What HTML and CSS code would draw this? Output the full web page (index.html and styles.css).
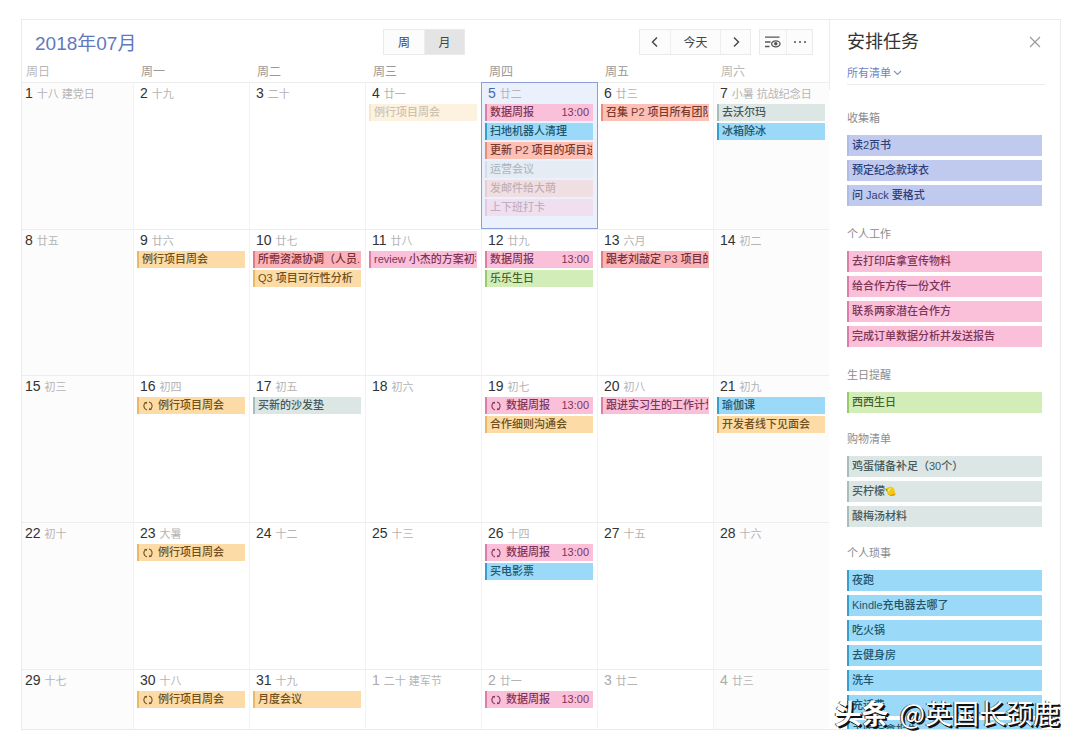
FILE: index.html
```html
<!DOCTYPE html>
<html lang="zh-CN">
<head>
<meta charset="utf-8">
<meta name="viewport" content="width=device-width, initial-scale=1">
<title>2018年07月</title>
<link rel="stylesheet" href="styles.css">
</head>
<body>
<svg width="0" height="0" class="sprite" aria-hidden="true">
  <symbol id="repeat" viewBox="0 0 12 12">
    <path d="M5 10A4.100 4.100 0 0 1 3 3.200M7 2A4.100 4.100 0 0 1 9 8.800" fill="none" stroke="currentColor" stroke-width="1.100"/>
    <path d="M2 2.200 5.200 1.700 4.400 4.300zM10 9.800 6.800 10.300 7.600 7.700z" fill="currentColor"/>
  </symbol>
</svg>
<div class="window">
  <main class="calendar">
    <header class="toolbar">
      <h1 class="month-title">2018年07月</h1>
      <div class="segmented">
        <button type="button">周</button><button type="button" class="active" aria-pressed="true">月</button>
      </div>
      <div class="tools">
        <div class="segmented nav">
          <button type="button" class="step" aria-label="上个月"><svg width="10" height="12" viewBox="0 0 10 12"><path d="M7 1.5 2.5 6 7 10.5" fill="none" stroke="#444" stroke-width="1.4"/></svg></button><button type="button" class="today-button">今天</button><button type="button" class="step" aria-label="下个月"><svg width="10" height="12" viewBox="0 0 10 12"><path d="M3 1.5 7.5 6 3 10.5" fill="none" stroke="#444" stroke-width="1.4"/></svg></button>
        </div>
        <div class="segmented view">
          <button type="button" aria-label="显示选项"><svg width="18" height="14" viewBox="0 0 18 14" fill="none" stroke="#555" stroke-width="1.3"><path d="M1 2.2H15.500M1 7H6.500M1 11.500H5.500"/><ellipse cx="11.800" cy="8.800" rx="4.200" ry="3"/><circle cx="11.800" cy="8.800" r="1.100" fill="#555"/></svg></button><button type="button" aria-label="更多"><svg width="14" height="4" viewBox="0 0 14 4" fill="#555"><circle cx="2" cy="2" r="1"/><circle cx="7" cy="2" r="1"/><circle cx="12" cy="2" r="1"/></svg></button>
        </div>
      </div>
    </header>
    <table class="month">
      <colgroup><col class="first-col"><col><col><col><col><col><col></colgroup>
      <thead>
        <tr><th class="weekend">周日</th><th>周一</th><th>周二</th><th>周三</th><th>周四</th><th>周五</th><th class="weekend">周六</th></tr>
      </thead>
      <tbody>
        <tr>
          <td class="weekend"><div class="day"><b>1</b>十八 建党日</div></td>
          <td><div class="day"><b>2</b>十九</div></td>
          <td><div class="day"><b>3</b>二十</div></td>
          <td><div class="day"><b>4</b>廿一</div>
            <ul><li class="event orange done"><span>例行项目周会</span></li></ul></td>
          <td class="today"><div class="day"><b>5</b>廿二</div>
            <ul>
              <li class="event pink"><span>数据周报</span><time>13:00</time></li>
              <li class="event blue"><span>扫地机器人清理</span></li>
              <li class="event salmon"><span>更新 P2 项目的项目进度</span></li>
              <li class="event gray done"><span>运营会议</span></li>
              <li class="event salmon done"><span>发邮件给大萌</span></li>
              <li class="event pink done"><span>上下班打卡</span></li>
            </ul></td>
          <td><div class="day"><b>6</b>廿三</div>
            <ul><li class="event salmon"><span>召集 P2 项目所有团队</span></li></ul></td>
          <td class="weekend"><div class="day"><b>7</b>小暑 抗战纪念日</div>
            <ul><li class="event gray"><span>去沃尔玛</span></li><li class="event blue"><span>冰箱除冰</span></li></ul></td>
        </tr>
        <tr class="second-week">
          <td class="weekend"><div class="day"><b>8</b>廿五</div></td>
          <td><div class="day"><b>9</b>廿六</div>
            <ul><li class="event orange"><span>例行项目周会</span></li></ul></td>
          <td><div class="day"><b>10</b>廿七</div>
            <ul><li class="event red"><span>所需资源协调（人员..</span></li><li class="event orange"><span>Q3 项目可行性分析</span></li></ul></td>
          <td><div class="day"><b>11</b>廿八</div>
            <ul><li class="event pink"><span>review 小杰的方案初稿</span></li></ul></td>
          <td><div class="day"><b>12</b>廿九</div>
            <ul><li class="event pink"><span>数据周报</span><time>13:00</time></li><li class="event green"><span>乐乐生日</span></li></ul></td>
          <td><div class="day"><b>13</b>六月</div>
            <ul><li class="event red"><span>跟老刘敲定 P3 项目的</span></li></ul></td>
          <td class="weekend"><div class="day"><b>14</b>初二</div></td>
        </tr>
        <tr>
          <td class="weekend"><div class="day"><b>15</b>初三</div></td>
          <td><div class="day"><b>16</b>初四</div>
            <ul><li class="event orange"><svg><use href="#repeat"/></svg><span>例行项目周会</span></li></ul></td>
          <td><div class="day"><b>17</b>初五</div>
            <ul><li class="event gray"><span>买新的沙发垫</span></li></ul></td>
          <td><div class="day"><b>18</b>初六</div></td>
          <td><div class="day"><b>19</b>初七</div>
            <ul><li class="event pink"><svg><use href="#repeat"/></svg><span>数据周报</span><time>13:00</time></li><li class="event orange"><span>合作细则沟通会</span></li></ul></td>
          <td><div class="day"><b>20</b>初八</div>
            <ul><li class="event pink"><span>跟进实习生的工作计划</span></li></ul></td>
          <td class="weekend"><div class="day"><b>21</b>初九</div>
            <ul><li class="event blue"><span>瑜伽课</span></li><li class="event orange"><span>开发者线下见面会</span></li></ul></td>
        </tr>
        <tr>
          <td class="weekend"><div class="day"><b>22</b>初十</div></td>
          <td><div class="day"><b>23</b>大暑</div>
            <ul><li class="event orange"><svg><use href="#repeat"/></svg><span>例行项目周会</span></li></ul></td>
          <td><div class="day"><b>24</b>十二</div></td>
          <td><div class="day"><b>25</b>十三</div></td>
          <td><div class="day"><b>26</b>十四</div>
            <ul><li class="event pink"><svg><use href="#repeat"/></svg><span>数据周报</span><time>13:00</time></li><li class="event blue"><span>买电影票</span></li></ul></td>
          <td><div class="day"><b>27</b>十五</div></td>
          <td class="weekend"><div class="day"><b>28</b>十六</div></td>
        </tr>
        <tr class="last-week">
          <td class="weekend"><div class="day"><b>29</b>十七</div></td>
          <td><div class="day"><b>30</b>十八</div>
            <ul><li class="event orange"><svg><use href="#repeat"/></svg><span>例行项目周会</span></li></ul></td>
          <td><div class="day"><b>31</b>十九</div>
            <ul><li class="event orange"><span>月度会议</span></li></ul></td>
          <td class="other"><div class="day"><b>1</b>二十 建军节</div></td>
          <td class="other"><div class="day"><b>2</b>廿一</div>
            <ul><li class="event pink"><svg><use href="#repeat"/></svg><span>数据周报</span><time>13:00</time></li></ul></td>
          <td class="other"><div class="day"><b>3</b>廿二</div></td>
          <td class="other weekend"><div class="day"><b>4</b>廿三</div></td>
        </tr>
      </tbody>
    </table>
  </main>

  <aside class="panel">
    <header class="panel-head">
      <h2>安排任务</h2>
      <button type="button" class="close" aria-label="关闭"><svg width="12" height="12" viewBox="0 0 12 12"><path d="M1 1 11 11M11 1 1 11" fill="none" stroke="#999" stroke-width="1.1"/></svg></button>
    </header>
    <div class="filter">
      <select aria-label="清单"><option>所有清单</option></select>
      <svg width="9" height="6" viewBox="0 0 9 6"><path d="M1 1 4.500 4.500 8 1" fill="none" stroke="#7f93cf" stroke-width="1.200"/></svg>
    </div>
    <div class="lists">
      <section><h3>收集箱</h3>
        <ul><li class="task indigo">读2页书</li><li class="task indigo">预定纪念款球衣</li><li class="task indigo">问 Jack 要格式</li></ul></section>
      <section><h3>个人工作</h3>
        <ul><li class="task pink">去打印店拿宣传物料</li><li class="task pink">给合作方传一份文件</li><li class="task pink">联系两家潜在合作方</li><li class="task pink">完成订单数据分析并发送报告</li></ul></section>
      <section><h3>生日提醒</h3>
        <ul><li class="task green">西西生日</li></ul></section>
      <section><h3>购物清单</h3>
        <ul><li class="task gray">鸡蛋储备补足（30个）</li>
          <li class="task gray">买柠檬<svg width="11" height="11" viewBox="0 0 11 11" role="img" aria-label="柠檬"><path d="M.3 3C1.500 2.800 2.500.8 5 .8 8 .6 9.800 3 9.800 5.500L10.800 8 9.800 9.500 8 9.600C5.500 10.300 2.500 9 1.800 6.500 1.700 5 1.200 4.400.3 3z" fill="#f2c913"/><path d="M2.500 4.500C3.500 2.500 5 2 6.500 2.200 5.500 3 4.500 4 4 6z" fill="#fbe96a"/><path d="M3 8C5 9.500 7.500 9 9.500 7.500L9.800 9.300 8 9.600C6 10.200 4 9.500 3 8z" fill="#c98a12"/><path d="M0 2.500 2.500 3.500 2 5.500z" fill="#6d8f2c"/></svg></li>
          <li class="task gray">酸梅汤材料</li></ul></section>
      <section><h3>个人琐事</h3>
        <ul><li class="task blue">夜跑</li><li class="task blue">Kindle充电器去哪了</li><li class="task blue">吃火锅</li><li class="task blue">去健身房</li><li class="task blue">洗车</li><li class="task blue">充话费</li><li class="task blue">去医院拿报告</li></ul></section>
    </div>
  </aside>
</div>
<p class="watermark"><strong>头条</strong> @英国长颈鹿</p>
</body>
</html>
```

FILE: styles.css
```css
* { box-sizing: border-box; }

body {
  margin: 0;
  height: 100vh;
  padding: 19px 19px 19px 21px;
  background: #fff;
  color: #444;
  font-family: "Liberation Sans", "Noto Sans CJK SC", sans-serif;
  font-size: 11px;
  position: relative;
}

h1, h2, h3, p, ul { margin: 0; padding: 0; font-weight: 400; }
ul { list-style: none; }
button, select { font: inherit; color: inherit; padding: 0; border: 0; background: none; }
svg { display: block; flex: none; }
.sprite { position: absolute; }

.window {
  height: 100%;
  display: grid;
  grid-template-columns: minmax(0, 1fr) 231px;
  border: 1px solid #ebebeb;
  overflow: hidden;
}

/* Calendar */
.calendar { min-width: 0; min-height: 0; overflow: hidden; }

.toolbar {
  display: grid;
  grid-template-columns: 1fr auto 1fr;
  align-items: center;
  height: 43px;
  padding: 0 16px 0 13px;
}

.month-title { font-size: 19px; line-height: 28px; color: #5f78c0; padding-top: 4px; }

.segmented {
  display: flex;
  height: 26px;
  border: 1px solid #eaeaea;
  background: #fcfcfc;
  font-size: 12px;
}
.segmented button {
  width: 40px;
  display: flex;
  align-items: center;
  justify-content: center;
}
.segmented button + button { border-left: 1px solid #eee; }
.segmented .active { background: #e4e4e4; }
.tools { display: flex; justify-content: flex-end; gap: 8px; }
.nav .step { width: 30px; }
.nav .today-button { width: 50px; }
.view button { width: 26px; }

.month {
  width: 100%;
  table-layout: fixed;
  border-spacing: 0;
}
.first-col { width: 111px; }
.month th {
  height: 19px;
  padding: 0 0 1px 8px;
  text-align: left;
  font-size: 12px;
  font-weight: 400;
  line-height: 16px;
  color: #999;
}
.month th.weekend { color: #b8b8b8; }
.month th:first-child { padding-left: 4px; }
.month td {
  height: 147px;
  padding: 0 4px 0 3px;
  vertical-align: top;
  border-top: 1px solid #ededed;
  border-left: 1px solid #f2f2f2;
}
.month td:first-child { border-left: 0; padding-left: 0; }
.month td.weekend { background: #fcfcfc; }
.month td.today {
  position: relative;
  background: #eaf0fc;
  border-color: #8c9fd6;
  box-shadow: 1px 0 0 #8c9fd6, inset 0 -1px 0 #8c9fd6;
}
.month .second-week td { height: 146px; }
.month .last-week td { height: 61px; }

.day {
  height: 21px;
  padding-left: 3px;
  font-size: 11px;
  line-height: 21px;
  color: #b4b4b4;
  white-space: nowrap;
}
.day b { font-size: 14px; font-weight: 400; color: #333; margin-right: 4px; }
.today .day b { color: #4a66b4; }
.other .day b { color: #aaa; }

.event {
  display: flex;
  align-items: center;
  height: 17px;
  margin-bottom: 2px;
  padding: 0 1px 0 3px;
  border-left: 2px solid;
  font-weight: 500;
  line-height: 17px;
  white-space: nowrap;
}
.event span { flex: 1; overflow: hidden; }
.event time { margin-right: 3px; }
.event svg { width: 12px; height: 12px; margin-right: 4px; }
.event.done { opacity: 0.35; }

/* Task panel */
.panel {
  min-height: 0;
  overflow: hidden;
  padding: 0 18px 0 17px;
  border-left: 1px solid transparent;
  border-image: linear-gradient(#ececec 70px, transparent 71px) 1;
}
.panel-head {
  display: flex;
  justify-content: space-between;
  align-items: center;
  height: 44px;
}
.panel-head h2 { font-size: 18px; line-height: 26px; color: #333; }
.close { display: flex; margin-right: 1px; }
.filter {
  display: flex;
  align-items: center;
  height: 21px;
  margin-right: -3px;
  padding-bottom: 2px;
  border-bottom: 1px solid #ebebeb;
}
.filter select { appearance: none; color: #6e84c8; line-height: 16px; outline: 0; }
.filter svg { margin-left: 2px; }

.lists { padding-top: 25px; }
.lists h3 {
  margin-bottom: 9px;
  font-size: 11px;
  line-height: 16px;
  color: #8c8c8c;
}
.lists section { margin-bottom: 20px; }
.lists section:nth-child(n + 3) { margin-bottom: 18px; }
.task {
  display: flex;
  align-items: center;
  height: 21px;
  margin-bottom: 4px;
  padding-left: 3px;
  border-left: 2px solid;
  font-weight: 500;
  line-height: 21px;
  white-space: nowrap;
}
.task:last-child { margin-bottom: 0; }

/* List colours */
.pink { background: #fbc0d9; border-color: #dc7ea8; color: #7d3558; }
.blue { background: #9adaf8; border-color: #35a0cf; color: #20566f; }
.orange { background: #fcdba6; border-color: #e9b965; color: #70501c; }
.salmon { background: #fdc0b4; border-color: #e98c7c; color: #7b3a2e; }
.red { background: #fab4b9; border-color: #dd7f8a; color: #7b3038; }
.green { background: #d3edb9; border-color: #98cb68; color: #47622c; }
.gray { background: #dce7e5; border-color: #a9bebb; color: #47585a; }
.indigo { background: #c0caef; border-color: #b0bce8; color: #303f78; }

.watermark {
  position: absolute;
  right: 20px;
  bottom: 18px;
  font-family: "Noto Sans CJK SC", sans-serif;
  font-size: 27px;
  line-height: 36px;
  color: #fff;
  text-shadow: 2px 2px 0 #111, 1px 1px 0 #111, -1px 0 0 #555;
  white-space: nowrap;
}
.watermark strong { font-weight: 700; margin-right: 5px; }
```
